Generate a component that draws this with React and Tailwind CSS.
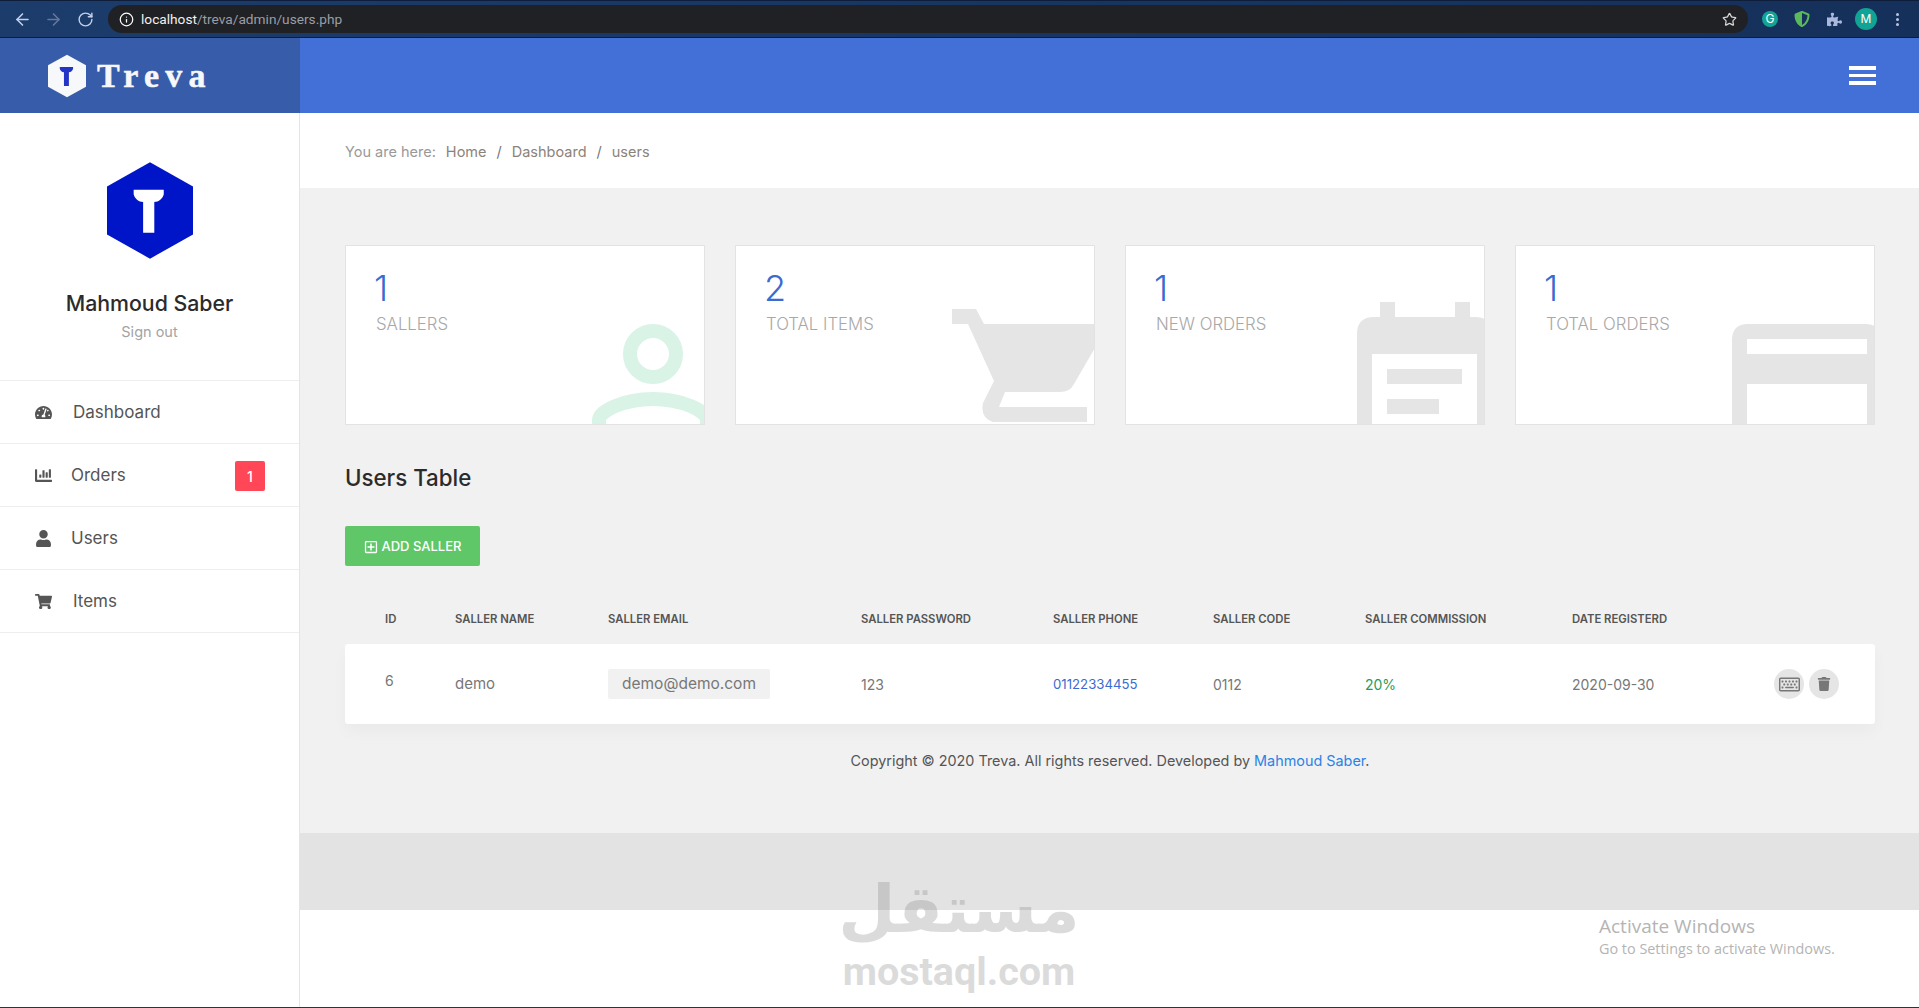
import React from "react";
import { ArrowLeft, ArrowRight, RotateCw, Info, Star } from "lucide-react";
import {
  FaTachometerAlt,
  FaChartBar,
  FaUser,
  FaShoppingCart,
  FaRegPlusSquare,
  FaRegKeyboard,
  FaTrash,
  FaPuzzlePiece,
  FaShieldAlt,
} from "react-icons/fa";

const tableCols =
  "grid grid-cols-[70px_153px_253px_192px_160px_152px_207px_202px_1fr] pl-[40px] items-center";

const navItems = [
  { label: "Dashboard", Icon: FaTachometerAlt, gap: "w-[38px]" },
  { label: "Orders", Icon: FaChartBar, badge: "1", gap: "w-[36px]" },
  { label: "Users", Icon: FaUser, gap: "w-[36px]" },
  { label: "Items", Icon: FaShoppingCart, gap: "w-[38px]" },
];

const headers = [
  "ID",
  "SALLER NAME",
  "SALLER EMAIL",
  "SALLER PASSWORD",
  "SALLER PHONE",
  "SALLER CODE",
  "SALLER COMMISSION",
  "DATE REGISTERD",
];

// T mark used in both hexagon logos (100x112 box)
const HexLogo = ({ hex, mark, className }) => (
  <svg viewBox="0 0 100 112" className={className}>
    <polygon points="50,0 100,28 100,84 50,112 0,84 0,28" fill={hex} />
    <path d="M31 32 H66 V37 C65 42 60 46 55 46 V82 H42 V46 C37 46 32 42 31 37Z" fill={mark} />
  </svg>
);

const StatCard = ({ value, label, children }) => (
  <div className="relative h-[180px] w-[360px] overflow-hidden border border-[#e3e3e3] bg-white pl-[30px] pt-[20px]">
    <div className="-ml-[2px] text-[36px] font-light leading-[44px] text-[#3a6bd0]">{value}</div>
    <div className="mt-[1px] text-[16.8px] font-light leading-[26px] text-[#a8a8a8]">{label}</div>
    <svg viewBox="0 0 360 180" className="absolute left-0 top-0 h-[180px] w-[360px]">
      {children}
    </svg>
  </div>
);

export default function App() {
  return (
    <div className="relative flex h-screen w-full flex-col overflow-hidden bg-white font-[Inter,sans-serif] text-[#555]">
      {/* browser bar */}
      <div className="flex h-[38px] shrink-0 items-center border-y border-[#0e1e3a] bg-gradient-to-r from-[#1c3c6b] to-[#15305a] pl-[13px] pr-[14px]">
        <ArrowLeft size={19} className="text-[#c3d0ea]" />
        <ArrowRight size={19} className="ml-[12px] text-[#66779b]" />
        <RotateCw size={17} className="ml-[14px] text-[#c3d0ea]" />
        <div className="ml-[14px] flex h-[28px] w-[1640px] items-center rounded-full bg-[#202124] pl-[11px] pr-[11px] text-[13.7px]">
          <Info size={15} className="text-white" />
          <span className="ml-[7px] font-[Roboto,sans-serif] text-[#f1f1f1]">localhost</span>
          <span className="font-[Roboto,sans-serif] text-[#9a9ea6]">/treva/admin/users.php</span>
          <Star size={15} className="ml-auto text-[#d7d7d7]" />
        </div>
        <div className="ml-[14px] flex h-[16px] w-[16px] items-center justify-center rounded-full bg-[#11a394] text-[12px] text-white">
          G
        </div>
        <FaShieldAlt size={16} className="ml-[16px] text-[#5cb85c]" />
        <FaPuzzlePiece size={15} className="ml-[17px] text-[#a9b8dc]" />
        <div className="ml-[13px] flex h-[22px] w-[22px] items-center justify-center rounded-full bg-[#11a394] text-[12px] text-white">
          M
        </div>
        <div className="ml-[19px] flex flex-col gap-[2px]">
          <span className="h-[3px] w-[3px] rounded-full bg-[#b7c4e2]"></span>
          <span className="h-[3px] w-[3px] rounded-full bg-[#b7c4e2]"></span>
          <span className="h-[3px] w-[3px] rounded-full bg-[#b7c4e2]"></span>
        </div>
      </div>

      {/* top bar */}
      <div className="flex h-[75px] shrink-0">
        <div className="flex w-[300px] items-center bg-[#375ca9] pl-[48px]">
          <HexLogo hex="#f7f8fa" mark="#2434c4" className="h-[44px] w-[38px]" />
          <span className="ml-[11px] font-['Liberation_Serif',serif] text-[34px] font-bold leading-none tracking-[6.2px] text-[#f7f8fa] [-webkit-text-stroke:0.5px_#f7f8fa]">
            Treva
          </span>
        </div>
        <div className="flex flex-1 items-center justify-end bg-[#4270d6] pr-[43px]">
          <div className="flex w-[27px] flex-col gap-[3.5px]">
            <span className="h-[4px] bg-white"></span>
            <span className="h-[3.5px] bg-white"></span>
            <span className="h-[4px] bg-white"></span>
          </div>
        </div>
      </div>

      <div className="flex min-h-0 flex-1">
        {/* sidebar */}
        <aside className="w-[300px] shrink-0 border-r border-[#e5e5e5] bg-white">
          <div className="flex h-[267px] flex-col items-center pt-[49px]">
            <HexLogo hex="#0015c8" mark="#ffffff" className="h-[97px] w-[86px]" />
            <div className="mt-[30px] text-[21.3px] font-medium leading-[28px] text-[#2b2b2b]">Mahmoud Saber</div>
            <div className="mt-[4px] text-[14.5px] leading-[22px] text-[#a3a3a3]">Sign out</div>
          </div>
          <nav className="border-t border-[#eeeeee]">
            {navItems.map(({ label, Icon, badge, gap }) => (
              <div key={label} className="flex h-[63px] items-center border-b border-[#eeeeee] pl-[35px] pr-[34px] text-[17px]">
                <Icon size={17} className="shrink-0 text-[#555]" />
                <span className={gap}></span>
                <span className="-ml-[17px] mt-[1px]">{label}</span>
                {badge && (
                  <span className="ml-auto mt-[2px] flex h-[30px] w-[30px] items-center justify-center rounded-[2px] bg-[#ff4757] text-[14px] font-medium text-white">
                    {badge}
                  </span>
                )}
              </div>
            ))}
          </nav>
        </aside>

        {/* content */}
        <main className="flex min-w-0 flex-1 flex-col">
          <div className="flex h-[75px] shrink-0 items-center bg-white pl-[45px] pt-[2px] text-[14.5px] text-[#999]">
            <span>You are here:</span>
            <span className="ml-[10px] text-[#8c8378]">Home</span>
            <span className="mx-[10px] text-[#777]">/</span>
            <span className="text-[#8c8378]">Dashboard</span>
            <span className="mx-[10px] text-[#777]">/</span>
            <span className="text-[#8c8378]">users</span>
          </div>

          <div className="h-[645px] shrink-0 bg-[#f1f1f1] pl-[45px] pr-[44px] pt-[57px]">
            <div className="flex gap-[30px]">
              <StatCard value="1" label="SALLERS">
                <circle cx="307" cy="108" r="23" fill="none" stroke="#d9f3e6" strokeWidth="14" />
                <path
                  d="M253 180 V174 C253 165 278 153 307 153 C336 153 361 165 361 174 V180"
                  fill="none"
                  stroke="#d9f3e6"
                  strokeWidth="14"
                />
              </StatCard>
              <StatCard value="2" label="TOTAL ITEMS">
                <path
                  d="M216 63 H240 L248 78 H360 V100 L338 138 Q334 146 324 146 H269 L263 161 H351 V176 H257 Q244 172 247 157 L258 135 L232 78 H216Z"
                  fill="#e5e5e5"
                />
              </StatCard>
              <StatCard value="1" label="NEW ORDERS">
                <path
                  fillRule="evenodd"
                  d="M254 56 H269 V71 H329 V56 H344 V71 H350 Q360 71 362 78 V180 H231 V88 Q231 71 248 71 H254Z M246 108 V180 H351 V108Z"
                  fill="#e5e5e5"
                />
                <rect x="261" y="123" width="75" height="15" fill="#e5e5e5" />
                <rect x="261" y="153" width="52" height="15" fill="#e5e5e5" />
              </StatCard>
              <StatCard value="1" label="TOTAL ORDERS">
                <path
                  fillRule="evenodd"
                  d="M232 78 H350 Q360 78 362 85 V180 H216 V94 Q216 78 232 78Z M231 93 V108 H351 V93Z M231 138 V180 H351 V138Z"
                  fill="#e5e5e5"
                />
              </StatCard>
            </div>

            <h2 className="mt-[39px] text-[22.3px] font-medium leading-[28px] text-[#2b2b2b]">Users Table</h2>

            <button className="mt-[34px] flex h-[40px] w-[135px] items-center justify-center gap-[4px] rounded-[2px] bg-[#5fc768] pt-[1px] text-[13px] font-medium text-white">
              <FaRegPlusSquare size={14} />
              ADD SALLER
            </button>

            <div className={`${tableCols} mb-[8px] mt-[37px] h-[33px] text-[11.3px] font-semibold text-[#555]`}>
              {headers.map((h) => (
                <div key={h}>{h}</div>
              ))}
            </div>

            <div className={`${tableCols} h-[80px] rounded-[3px] bg-white text-[14px] text-[#777] shadow-[0_8px_16px_rgba(0,0,0,0.03)]`}>
              <div className="-mt-[8px]">6</div>
              <div className="text-[15px]">demo</div>
              <div>
                <span className="flex h-[30px] w-[162px] items-center justify-center rounded-[2px] bg-[#f1f1f1] text-[15.5px]">
                  demo@demo.com
                </span>
              </div>
              <div>123</div>
              <div className="mt-[1px] text-[13.2px] text-[#3a6bd0]">01122334455</div>
              <div>0112</div>
              <div className="text-[#1e9e5a]">20%</div>
              <div>2020-09-30</div>
              <div className="flex gap-[5px]">
                <span className="flex h-[30px] w-[30px] items-center justify-center rounded-full bg-[#e5e5e5]">
                  <FaRegKeyboard size={21} className="text-[#777]" />
                </span>
                <span className="flex h-[30px] w-[30px] items-center justify-center rounded-full bg-[#e5e5e5]">
                  <FaTrash size={14} className="text-[#777]" />
                </span>
              </div>
            </div>

            <p className="mt-[27px] text-center text-[14.4px] leading-[20px] text-[#555]">
              Copyright © 2020 Treva. All rights reserved. Developed by{" "}
              <a className="text-[#2b83e6]">Mahmoud Saber</a>.
            </p>
          </div>

          <div className="h-[77px] shrink-0 bg-[#e3e3e3]"></div>
          <div className="flex-1 bg-white"></div>
        </main>
      </div>

      <div className="h-px shrink-0 bg-[#333]"></div>

      {/* watermarks on top of the page */}
      <div className="pointer-events-none absolute left-[843px] top-[868px] flex w-[232px] flex-col items-center text-[#8a8a8a] opacity-30">
        <div dir="rtl" className="font-['DejaVu_Sans',sans-serif] text-[66px] font-bold leading-[84px]">
          مستقل
        </div>
        <div className="font-[Roboto,sans-serif] text-[39.5px] font-bold leading-[40px]">mostaql.com</div>
      </div>
      <div className="pointer-events-none absolute left-[1599px] top-[914px] font-['Open_Sans',sans-serif] text-[#b4b4b4]">
        <div className="text-[19px] leading-[24px]">Activate Windows</div>
        <div className="mt-[1px] text-[14.4px] leading-[20px]">Go to Settings to activate Windows.</div>
      </div>
    </div>
  );
}
